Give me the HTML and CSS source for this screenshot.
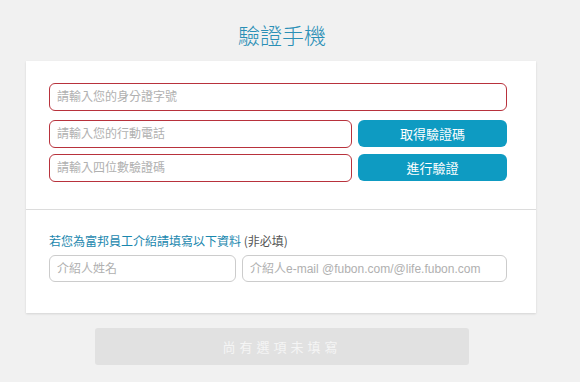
FILE: index.html
```html
<!DOCTYPE html>
<html lang="zh-Hant">
<head>
    <meta charset="UTF-8">
    <title>驗證手機</title>
    <link rel="stylesheet" href="styles.css">
</head>
<body>
    <div class="page">
        <div class="page-title">驗證手機</div>

        <div class="card">
            <div class="card-main">
                <div class="form-row">
                    <input class="field field-error" type="text" placeholder="請輸入您的身分證字號">
                </div>
                <div class="form-row">
                    <input class="field field-error" type="text" placeholder="請輸入您的行動電話">
                    <button class="btn-blue" type="button">取得驗證碼</button>
                </div>
                <div class="form-row row-code">
                    <input class="field field-error" type="text" placeholder="請輸入四位數驗證碼">
                    <button class="btn-blue" type="button">進行驗證</button>
                </div>
            </div>

            <div class="card-extra">
                <div class="extra-label">若您為富邦員工介紹請填寫以下資料 <span class="optional">(非必填)</span></div>
                <div class="form-row">
                    <input class="field field-name" type="text" placeholder="介紹人姓名">
                    <input class="field field-mail" type="text" placeholder="介紹人e-mail @fubon.com/@life.fubon.com">
                </div>
            </div>
        </div>

        <button class="btn-submit" type="button" disabled>尚有選項未填寫</button>
    </div>
</body>
</html>
```

FILE: styles.css
```css
body {
    margin: 0;
    background-color: #f1f1f1;
    font-family: "Liberation Sans", Arial, "Noto Sans CJK TC", sans-serif;
    font-size: 12px;
    color: #555;
}
.page {
    width: 510px;
    margin: 0 auto 0 26px;
    display: flex;
    flex-direction: column;
    align-items: center;
}
.page-title {
    margin-top: 20px;
    height: 41px;
    font-family: "Noto Sans CJK TC", sans-serif;
    font-weight: 300;
    font-size: 22px;
    line-height: 28px;
    color: #2a8fb6;
    text-align: center;
    padding-left: 2px;
}
.card {
    width: 100%;
    background-color: #fff;
    box-shadow: 0 1px 2px rgba(0, 0, 0, 0.12);
}
.card-main {
    padding: 22px 29px 27px 23px;
    border-bottom: 1px solid #dcdcdc;
    display: flex;
    flex-direction: column;
    gap: 9px;
}
.card-main .row-code {
    margin-top: -3px;
}
.form-row {
    display: flex;
    gap: 6px;
}
.field {
    box-sizing: border-box;
    height: 28px;
    flex: 1;
    min-width: 0;
    padding: 0 7px;
    border: 1px solid #ccc;
    border-radius: 6px;
    background: #fff;
    font-family: "Liberation Sans", Arial, "Noto Sans CJK TC", sans-serif;
    font-size: 12px;
    color: #333;
    outline: none;
}
.field::placeholder {
    color: #b0b0b0;
}
.field-error {
    border-color: #b8323c;
}
.btn-blue {
    width: 149px;
    height: 27px;
    border: 0;
    border-radius: 6px;
    background-color: #0e9bc2;
    color: #fff;
    font-family: "Noto Sans CJK TC", sans-serif;
    font-size: 13px;
    cursor: pointer;
}
.card-extra {
    padding: 22px 29px 31px 23px;
}
.extra-label {
    font-family: "Noto Sans CJK TC", sans-serif;
    font-size: 12px;
    line-height: 18px;
    color: #1a87ae;
    margin-bottom: 5px;
}
.optional {
    color: #555;
}
.card-extra .field {
    height: 27px;
}
.field-name {
    flex: 0 0 187px;
}
.btn-submit {
    margin-top: 15px;
    margin-left: 2px;
    width: 374px;
    height: 37px;
    border: 0;
    border-radius: 3px;
    background-color: #e1e1e1;
    color: #f5f5f5;
    font-family: "Noto Sans CJK TC", sans-serif;
    font-size: 13px;
    letter-spacing: 4px;
}
```
